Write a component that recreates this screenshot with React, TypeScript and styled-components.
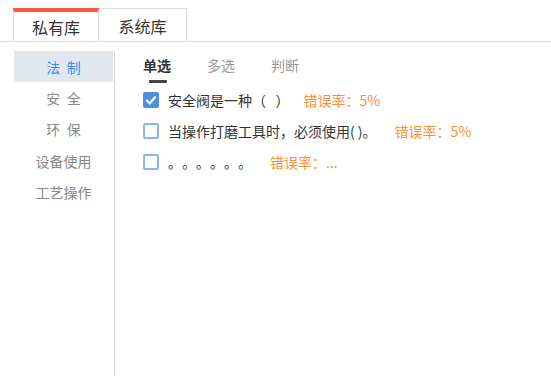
import { useState } from 'react';
import styled, { createGlobalStyle } from 'styled-components';

const GlobalStyle = createGlobalStyle`
  html, body {
    margin: 0;
    padding: 0;
    background: #fff;
    font-family: "Noto Sans CJK SC", "Noto Sans", sans-serif;
    text-spacing-trim: space-all;
  }
`;

const Page = styled.div`
  width: 551px;
  height: 376px;
  display: flex;
  flex-direction: column;
  overflow: hidden;
`;

const TabBar = styled.div`
  display: flex;
  padding: 8px 0 0 13px;
  border-bottom: 1px solid #dddddd;
`;

const Tab = styled.div<{ $active?: boolean }>`
  width: 86px;
  height: 33px;
  display: flex;
  align-items: center;
  justify-content: center;
  box-sizing: border-box;
  font-size: 16px;
  color: #333;
  border: 1px solid #dddddd;
  border-bottom: none;
  border-top: ${({ $active }) => ($active ? '4px solid #fb5a35' : '1px solid #dddddd')};
  padding-top: ${({ $active }) => ($active ? '0' : '2px')};
  & + & {
    border-left: none;
    width: 88px;
  }
`;

const Body = styled.div`
  flex: 1;
  display: flex;
  margin-top: 9px;
`;

const Sidebar = styled.div`
  margin-left: 14px;
  width: 100px;
  border-right: 1px solid #dcd4d4;
  display: flex;
  flex-direction: column;
`;

const SideItem = styled.div<{ $active?: boolean }>`
  height: ${({ $active }) => ($active ? '31px' : '31.5px')};
  display: flex;
  align-items: center;
  justify-content: center;
  font-size: 14px;
  color: ${({ $active }) => ($active ? '#3b8cf0' : '#888')};
  background: ${({ $active }) => ($active ? '#e1e7ef' : 'transparent')};
  margin-right: 1px;
  white-space: pre;
`;

const Content = styled.div`
  flex: 1;
  padding-left: 28px;
`;

const SubTabs = styled.div`
  display: flex;
  gap: 36px;
  height: 31px;
`;

const SubTab = styled.div<{ $active?: boolean }>`
  position: relative;
  font-size: 14px;
  line-height: 28px;
  font-weight: ${({ $active }) => ($active ? 700 : 400)};
  color: ${({ $active }) => ($active ? '#333' : '#999')};
  ${({ $active }) =>
    $active &&
    `&::after {
      content: '';
      position: absolute;
      left: 6px;
      right: 4px;
      bottom: -1px;
      height: 3px;
      border-radius: 1px;
      background: #444;
    }`}
`;

const List = styled.div`
  display: flex;
  flex-direction: column;
  padding-top: 2px;
`;

const Row = styled.label`
  display: flex;
  align-items: center;
  height: 31px;
  font-size: 14px;
  color: #333;
  cursor: pointer;
`;

const Box = styled.span<{ $checked?: boolean }>`
  width: 16px;
  height: 16px;
  box-sizing: border-box;
  border-radius: 2px;
  margin-right: 9px;
  display: flex;
  align-items: center;
  justify-content: center;
  flex-shrink: 0;
  background: ${({ $checked }) => ($checked ? '#4a8fe6' : '#fff')};
  border: 2px solid ${({ $checked }) => ($checked ? '#4a8fe6' : '#8ab6ef')};
`;

const Question = styled.span`
  white-space: pre;
`;

const ErrorRate = styled.span<{ $gap: number }>`
  margin-left: ${({ $gap }) => $gap}px;
  color: #f7923a;
`;

const sideItems = ['法  制', '安  全', '环  保', '设备使用', '工艺操作'];

const questions = [
  { text: '安全阀是一种（   ）', rate: '错误率：5%', checked: true, gap: 14 },
  { text: '当操作打磨工具时，必须使用( )。', rate: '错误率：5%', checked: false, gap: 18 },
  { text: '。。。。。。', rate: '错误率：...', checked: false, gap: 18 },
];

export default function App() {
  const [checked, setChecked] = useState(questions.map((q) => q.checked));

  return (
    <Page>
      <GlobalStyle />
      <TabBar>
        <Tab $active>私有库</Tab>
        <Tab>系统库</Tab>
      </TabBar>
      <Body>
        <Sidebar>
          {sideItems.map((item, i) => (
            <SideItem key={item} $active={i === 0}>
              {item}
            </SideItem>
          ))}
        </Sidebar>
        <Content>
          <SubTabs>
            <SubTab $active>单选</SubTab>
            <SubTab>多选</SubTab>
            <SubTab>判断</SubTab>
          </SubTabs>
          <List>
            {questions.map((q, i) => (
              <Row
                key={i}
                onClick={() => setChecked((c) => c.map((v, j) => (j === i ? !v : v)))}
              >
                <Box $checked={checked[i]}>
                  {checked[i] && (
                    <svg width="12" height="12" viewBox="0 0 12 12">
                      <path d="M1.3 6 L4.6 9.3 L10.8 2.6" fill="none" stroke="#fff" strokeWidth="2.2" />
                    </svg>
                  )}
                </Box>
                <Question>{q.text}</Question>
                <ErrorRate $gap={q.gap}>{q.rate}</ErrorRate>
              </Row>
            ))}
          </List>
        </Content>
      </Body>
    </Page>
  );
}
